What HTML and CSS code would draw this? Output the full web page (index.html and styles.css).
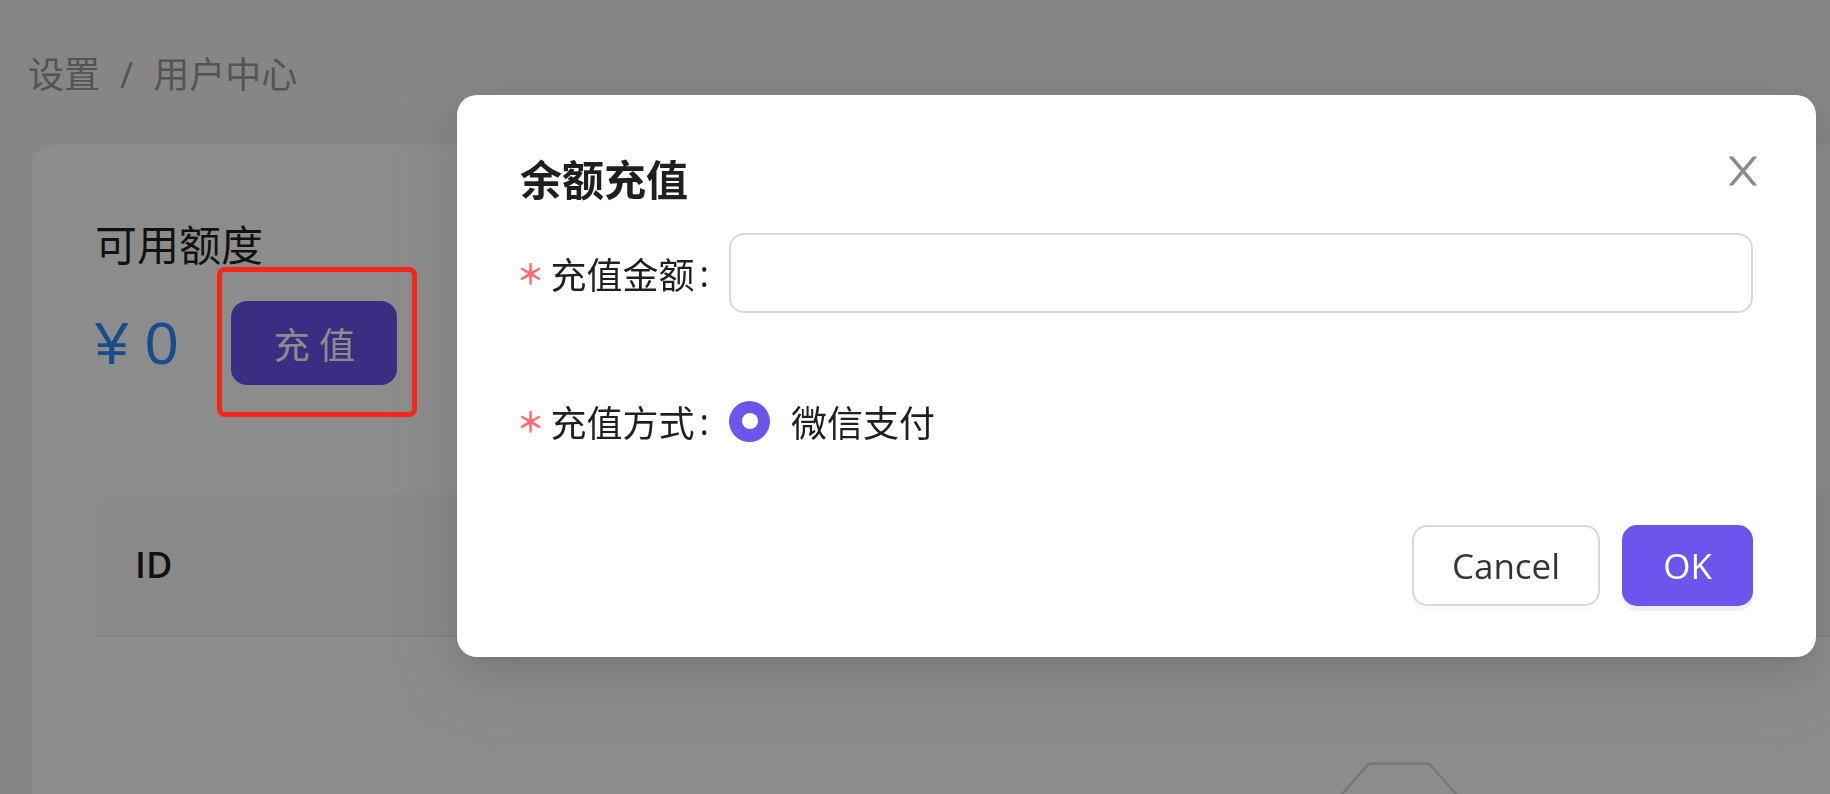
FILE: index.html
```html
<!DOCTYPE html>
<html lang="zh-CN">
<head>
<meta charset="utf-8">
<title>用户中心</title>
<link rel="stylesheet" href="styles.css">
</head>
<body>
<div class="app">
  <nav class="breadcrumb">
    <span class="crumb">设置</span>
    <span class="sep">/</span>
    <span class="crumb">用户中心</span>
  </nav>
  <section class="card">
    <div class="balance-title">可用额度</div>
    <div class="balance-row">
      <span class="balance-amount">¥ 0</span>
      <button class="btn-recharge" type="button">充 值</button>
    </div>
    <div class="table">
      <div class="thead"><div class="th">ID</div></div>
      <div class="tbody">
        <svg class="empty-img" viewBox="0 0 64 41" xmlns="http://www.w3.org/2000/svg">
          <g transform="translate(0 1)" fill="none" fill-rule="evenodd">
            <ellipse fill="#f5f5f5" cx="32" cy="33" rx="32" ry="7"/>
            <g fill-rule="nonzero" stroke="#d9d9d9">
              <path d="M55 12.76L44.854 1.258C44.367.474 43.656 0 42.907 0H21.093c-.749 0-1.460.474-1.947 1.257L9 12.761V22h46v-9.240z"/>
              <path d="M41.613 15.931c0-1.605.994-2.930 2.227-2.931H55v18.137C55 33.260 53.680 35 52.050 35h-40.100C10.320 35 9 33.259 9 31.137V13h11.160c1.233 0 2.227 1.323 2.227 2.928v.022c0 1.605 1.005 2.901 2.237 2.901h14.752c1.232 0 2.237-1.308 2.237-2.913v-.007z" fill="#fafafa"/>
            </g>
          </g>
        </svg>
      </div>
    </div>
  </section>
</div>

<div class="mask"></div>
<div class="annotation"></div>

<div class="modal" role="dialog">
  <button class="modal-close" type="button" aria-label="Close">
    <svg viewBox="64 64 896 896" xmlns="http://www.w3.org/2000/svg"><path d="M563.8 512l262.5-312.9c4.4-5.2.7-13.1-6.1-13.1h-79.8c-4.7 0-9.2 2.1-12.3 5.7L511.6 449.8 295.1 191.7c-3-3.6-7.5-5.7-12.3-5.7H203c-6.8 0-10.5 7.9-6.1 13.1L459.4 512 196.9 824.9A7.950 7.950 0 00203 838h79.8c4.7 0 9.2-2.1 12.3-5.7l216.5-258.1 216.5 258.1c3 3.6 7.5 5.7 12.3 5.7h79.8c6.8 0 10.5-7.9 6.1-13.1L563.8 512z"/></svg>
  </button>
  <div class="modal-title">余额充值</div>
  <div class="form">
    <div class="form-row">
      <label class="label"><span class="req">＊</span>充值金额<span class="colon">:</span></label>
      <div class="input"></div>
    </div>
    <div class="form-row">
      <label class="label"><span class="req">＊</span>充值方式<span class="colon">:</span></label>
      <div class="radio"><span class="radio-dot"></span><span>微信支付</span></div>
    </div>
  </div>
  <div class="footer">
    <button class="btn btn-default" type="button">Cancel</button>
    <button class="btn btn-primary" type="button">OK</button>
  </div>
</div>
</body>
</html>
```

FILE: styles.css
```css
html, body {
  margin: 0;
  padding: 0;
  overflow: hidden;
}

body {
  width: 1830px;
  height: 794px;
  background: #f5f5f5;
  font-family: "Open Sans", "Noto Sans CJK SC", sans-serif;
  color: rgba(0, 0, 0, 0.88);
}

.app {
  display: flex;
  flex-direction: column;
  align-items: flex-start;
}

.breadcrumb {
  display: flex;
  align-items: center;
  margin: 49px 0 0 28px;
  font-size: 36px;
  line-height: 52px;
  color: #9a9a9a;
}

.sep {
  margin: 0 20px;
}

.card {
  flex-shrink: 0;
  box-sizing: border-box;
  width: 2733px;
  height: 900px;
  margin: 44px 0 0 32px;
  padding: 68px 63px 0;
  background: #fff;
  border-radius: 20px;
}

.balance-title {
  font-size: 42px;
  line-height: 63px;
}

.balance-row {
  display: flex;
  align-items: center;
  gap: 53px;
  height: 84px;
  margin-top: 25px;
}

.balance-amount {
  font-family: "Liberation Sans", Arial, sans-serif;
  font-size: 60px;
  color: #2b8cff;
}

.btn-recharge {
  width: 166px;
  height: 84px;
  border: none;
  border-radius: 16px;
  background: #6b55ed;
  color: #fff;
  font-family: inherit;
  font-size: 36px;
  padding: 0;
}

.table {
  margin-top: 109px;
}

.thead {
  display: flex;
  align-items: center;
  box-sizing: border-box;
  height: 143px;
  background: #fafafa;
  border-bottom: 2px solid #f0f0f0;
  border-radius: 20px 20px 0 0;
}

.th {
  padding: 0 40px;
  font-size: 36px;
  font-weight: 600;
}

.tbody {
  display: flex;
  justify-content: center;
  padding-top: 124px;
}

.empty-img {
  width: 164px;
  height: 105px;
}

/* overlay layer */
.mask {
  position: fixed;
  inset: 0;
  background: rgba(0, 0, 0, 0.45);
  z-index: 10;
}

.annotation {
  position: absolute;
  left: 217px;
  top: 267px;
  width: 200px;
  height: 150px;
  box-sizing: border-box;
  border: 5px solid #f7261a;
  border-radius: 8px;
  z-index: 11;
}

.modal {
  position: absolute;
  left: 457px;
  top: 95px;
  width: 1359px;
  box-sizing: border-box;
  padding: 55px 63px 51px;
  background: #fff;
  border-radius: 20px;
  z-index: 12;
  box-shadow: 0 15px 40px 0 rgba(0, 0, 0, 0.08),
              0 8px 15px -10px rgba(0, 0, 0, 0.12),
              0 22px 70px 20px rgba(0, 0, 0, 0.05);
}

.modal-close {
  position: absolute;
  top: 48px;
  right: 46px;
  width: 55px;
  height: 55px;
  padding: 0;
  border: none;
  background: transparent;
  display: flex;
  align-items: center;
  justify-content: center;
}

.modal-close svg {
  width: 40px;
  height: 40px;
  fill: rgba(0, 0, 0, 0.45);
}

.modal-title {
  font-size: 42px;
  font-weight: 600;
  line-height: 60px;
  margin-bottom: 23px;
}

.form-row {
  display: grid;
  grid-template-columns: 209px 1fr;
  align-items: center;
  height: 80px;
}

.form-row + .form-row {
  margin-top: 68px;
}

.label {
  display: flex;
  align-items: center;
  justify-content: flex-end;
  padding-right: 20px;
  font-size: 36px;
  white-space: nowrap;
}

.req {
  color: #ff6b6b;
  font-family: "Noto Sans CJK SC", sans-serif;
  font-size: 28px;
  font-weight: 700;
  margin-right: 6px;
}

.colon {
  margin-left: 5px;
}

.input {
  box-sizing: border-box;
  height: 80px;
  border: 2px solid #d9d9d9;
  border-radius: 15px;
}

.radio {
  display: flex;
  align-items: center;
  gap: 21px;
  font-size: 36px;
}

.radio-dot {
  display: flex;
  align-items: center;
  justify-content: center;
  width: 41px;
  height: 41px;
  border-radius: 50%;
  background: #6b55ed;
}

.radio-dot::after {
  content: "";
  width: 16px;
  height: 16px;
  border-radius: 50%;
  background: #fff;
}

.footer {
  display: flex;
  justify-content: flex-end;
  gap: 22px;
  margin-top: 64px;
}

.btn {
  box-sizing: border-box;
  height: 81px;
  padding: 0;
  border-radius: 15px;
  font-family: inherit;
  font-size: 35px;
}

.btn-default {
  width: 188px;
  border: 2px solid #d9d9d9;
  background: #fff;
  color: rgba(0, 0, 0, 0.8);
  box-shadow: 0 5px 0 rgba(0, 0, 0, 0.02);
}

.btn-primary {
  width: 131px;
  border: none;
  background: #6b55ed;
  color: #fff;
  box-shadow: 0 5px 0 rgba(107, 85, 237, 0.1);
}
```
